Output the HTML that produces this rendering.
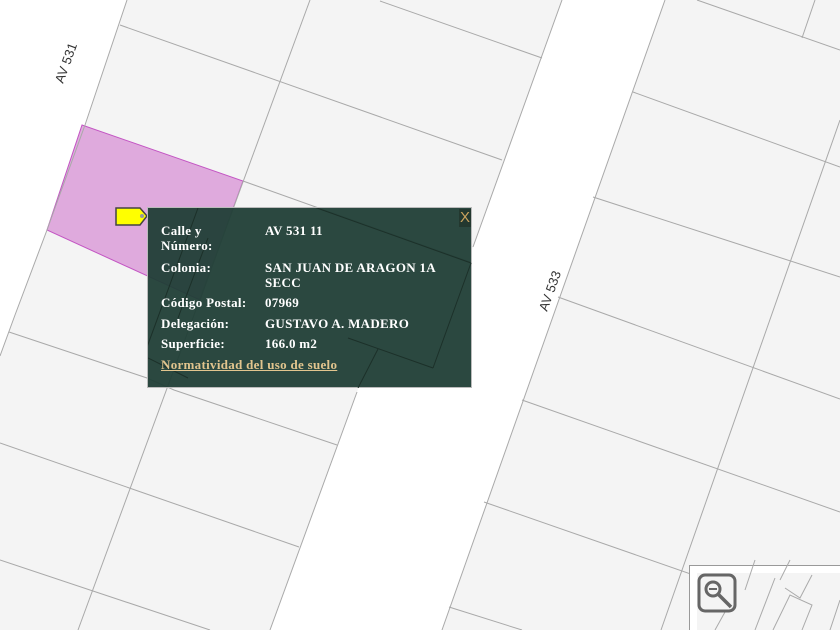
<!DOCTYPE html>
<html><head><meta charset="utf-8"><style>
html,body{margin:0;padding:0;width:840px;height:630px;overflow:hidden;background:#f4f4f4}
#map{position:absolute;left:0;top:0}
#pop{position:absolute;left:147px;top:207px;width:325px;height:181px;background:rgba(32,62,54,0.95);border:1px solid #bbb;box-sizing:border-box;font-family:"Liberation Serif",serif;font-weight:bold;font-size:13px;letter-spacing:0.3px;color:#fff;}
.r{position:absolute;line-height:15px;white-space:nowrap}
.x{position:absolute;left:311px;top:1px;width:12px;height:18px;background:#23382f;color:#c9a25e;font-family:"Liberation Sans",sans-serif;font-size:15px;font-weight:normal;line-height:18px;text-align:center;letter-spacing:0}
a{color:#e2c58e;text-decoration:underline}
</style></head><body>
<svg id="map" width="840" height="630" viewBox="0 0 840 630">
<rect width="840" height="630" fill="#f4f4f4"/>
<polygon points="0,0 127,0 85,125 47,230 15,315 0,356" fill="#fff"/>
<polygon points="562,0 665,0 442,630 270,630 357,392 375,345 440,330 473,247" fill="#fff"/>
<polygon points="82,125 243,181 200,300 47,230" fill="#dfaadd" stroke="#c355c3" stroke-width="1"/>
<g stroke="#a9a9a9" stroke-width="1" fill="none">
<polyline points="127,0 85,125 47,230 15,315 0,356"/>
<line x1="120" y1="25" x2="502" y2="160"/>
<line x1="380" y1="1" x2="542" y2="58"/>
<line x1="243" y1="181" x2="470" y2="262"/>
<line x1="310" y1="0" x2="78" y2="630"/>
<polyline points="562,0 473,247"/>
<line x1="357" y1="392" x2="270" y2="630"/>
<polyline points="9,332 147,378 174,390 337,445"/>
<line x1="0" y1="443" x2="299" y2="547"/>
<line x1="0" y1="560" x2="210" y2="630"/>
<line x1="665" y1="0" x2="442" y2="630"/>
<line x1="697" y1="0" x2="840" y2="50"/>
<line x1="815" y1="0" x2="802" y2="38"/>
<line x1="633" y1="92" x2="840" y2="167"/>
<line x1="840" y1="120" x2="661" y2="630"/>
<line x1="593" y1="197" x2="840" y2="277"/>
<line x1="558" y1="297" x2="840" y2="399"/>
<line x1="522" y1="400" x2="840" y2="512"/>
<line x1="484" y1="502" x2="840" y2="626"/>
<line x1="449" y1="607" x2="522" y2="630"/>
</g>
<text x="0" y="0" transform="translate(63,84) rotate(-70)" font-family="Liberation Sans,sans-serif" font-size="13" fill="#333">AV 531</text>
<text x="0" y="0" transform="translate(547,312) rotate(-70)" font-family="Liberation Sans,sans-serif" font-size="13" fill="#333">AV 533</text>
<polygon points="116,208 140,208 147,216 140,225 116,225" fill="#ffff00" stroke="#444" stroke-width="1.5"/>
<circle cx="142" cy="216" r="2" fill="#999"/>
<rect x="689.5" y="565.5" width="152" height="70" fill="#fff" stroke="#999"/>
<rect x="697" y="573" width="150" height="60" fill="#f4f4f4"/>
<g stroke="#aaa" fill="none">
<polyline points="745,590 755,560 "/>
<polyline points="780,580 790,560"/>
<polyline points="785,588 800,598 812,575"/>
<polyline points="773,630 790,595 812,605 802,630"/>
<polyline points="755,630 775,578"/>
<polyline points="715,630 725,612"/>
<polyline points="830,630 840,600"/>
</g>
<rect x="699" y="575" width="36" height="36" rx="6" fill="none" stroke="#666" stroke-width="3"/>
<circle cx="713" cy="589" r="7" fill="none" stroke="#666" stroke-width="3"/>
<line x1="709" y1="589" x2="717" y2="589" stroke="#666" stroke-width="2"/>
<line x1="718" y1="594" x2="731" y2="607" stroke="#666" stroke-width="3.5"/>
</svg>
<div id="pop">
<svg width="324" height="180" style="position:absolute;left:0;top:0">
<g stroke="#1c3029" stroke-width="1" fill="none">
<line x1="96" y1="-26" x2="323" y2="55"/>
<line x1="50" y1="0" x2="-60" y2="300"/>
<line x1="323" y1="55" x2="285" y2="160"/>
<line x1="0" y1="150" x2="40" y2="170"/>
<line x1="285" y1="160" x2="200" y2="130"/>
<line x1="230" y1="141" x2="210" y2="180"/>
<line x1="60" y1="30" x2="30" y2="110"/>
</g>
</svg>
<div class="x">X</div>
<div class="r" style="left:13px;top:15px">Calle y<br>Número:</div>
<div class="r" style="left:117px;top:15px">AV 531 11</div>
<div class="r" style="left:13px;top:52px">Colonia:</div>
<div class="r" style="left:117px;top:52px">SAN JUAN DE ARAGON 1A<br>SECC</div>
<div class="r" style="left:13px;top:87px">Código Postal:</div>
<div class="r" style="left:117px;top:87px">07969</div>
<div class="r" style="left:13px;top:108px">Delegación:</div>
<div class="r" style="left:117px;top:108px">GUSTAVO A. MADERO</div>
<div class="r" style="left:13px;top:128px">Superficie:</div>
<div class="r" style="left:117px;top:128px">166.0 m2</div>
<div class="r" style="left:13px;top:149px"><a>Normatividad del uso de suelo</a></div>
</div>
</body></html>
